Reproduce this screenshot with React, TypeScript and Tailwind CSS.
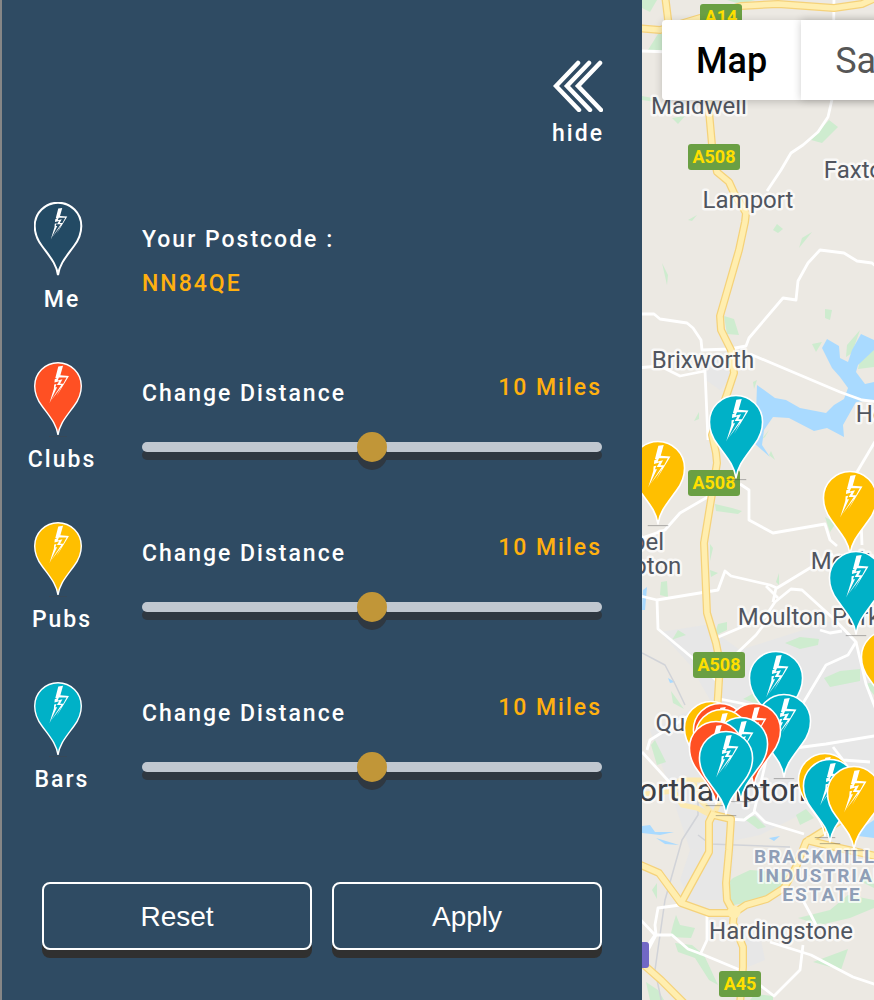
import { useState } from "react";

const COLORS = { me: "#234a64", clubs: "#ff5023", pubs: "#ffbf00", bars: "#00b1c7" };
type Kind = keyof typeof COLORS;

function PinShape({ kind }: { kind: Kind }) {
  return (
    <g>
      {kind !== "me" && (
        <path d="M-9 50.500H9" stroke="#444" strokeOpacity="0.35" strokeWidth="1" />
      )}
      <path
        d="M0 49C-1.500 38-8 31-16 20C-21 13.500-23.300 7-23.300 0A23.300 23.300 0 0 1 23.300 0C23.300 7 21 13.500 16 20C8 31 1.500 38 0 49Z"
        fill={COLORS[kind]}
        stroke="#fff"
        strokeWidth={kind === "me" ? 2 : 1.4}
      />
      <g transform={kind === "me" ? "translate(0 -1) scale(.25)" : "scale(.296)"} fill="#fff">
        <path d="M1-66L17-68L8-36L37-34L-6 36L29-29L3-29L-1-19L15-23L7-8L20-8L-24 50L11-3L-4-3L4-16L-12-12L-11-23L-3-26L-9-27Z" />
        <path d="M-13-5L-5-7L-9 4L-3 4L-29 58L-14 9Z" />
      </g>
    </g>
  );
}

function Legend({ kind, label }: { kind: Kind; label: string }) {
  return (
    <div className="flex flex-col items-center gap-2">
      <svg viewBox="-24 -24 56 76" className="h-[76px] w-14" aria-hidden="true">
        <PinShape kind={kind} />
      </svg>
      <span>{label}</span>
    </div>
  );
}

function DistanceRow({ kind, label }: { kind: Kind; label: string }) {
  const [miles, setMiles] = useState(10);
  const id = `distance-${kind}`;
  return (
    <div className="grid grid-cols-[120px_1fr] gap-5">
      <Legend kind={kind} label={label} />
      <div className="flex flex-col gap-6 pt-3">
        <div className="flex items-start justify-between">
          <label htmlFor={id} className="pt-1.5">
            Change Distance
          </label>
          <output htmlFor={id} className="text-[#ffb00f]">
            {miles} Miles
          </output>
        </div>
        <input
          id={id}
          type="range"
          min={0}
          max={20}
          value={miles}
          onChange={(e) => setMiles(Number(e.target.value))}
          className="my-2.5 block h-2.5 w-full appearance-none rounded-[5px] bg-[#c1c8d0] shadow-[0_8px_0_#2f3841] outline-none [&::-webkit-slider-thumb]:size-[30px] [&::-webkit-slider-thumb]:appearance-none [&::-webkit-slider-thumb]:rounded-full [&::-webkit-slider-thumb]:bg-[#c19638] [&::-webkit-slider-thumb]:shadow-[0_8px_0_#2f3841]"
        />
      </div>
    </div>
  );
}

const A_ROADS = [
  "M665-5L670 35L690 60L708 100L712 145L717 172L729 182L734 193L746 213L745 222L739 250L720 316L721 330L731 350L734 373L726 397L712 435L716 453L717 463L711 500L704 543L707 613L716 643L720 663L719 680L717 712",
  "M636 28L660 30L700 18L741 6L778 4L834 8L862 4L880-4",
  "M636 863L659 873L681 903L709 913L734 913L746 905L767 899L784 888L796 867L806 842L841 820",
  "M681 903L709 852L709 822L714 812",
  "M714 815L731 819L729 850L726 883L727 900L734 913L733 923L743 947L743 967L740 1004",
  "M636 958L661 980L685 1004",
  "M806 840L835 847L880 857",
];
const TOWN_ROADS = [
  "M636 795L674 791L680 780L706 780",
  "M674 791L682 805L697 808L714 817",
  "M694 783L700 800L714 815M720 800L714 815",
];
const ROADS = [
  "M642 51L672 52M834-4L833 95L828 117L818 132L803 145L791 153L781 170L767 191",
  "M636 314L654 314L660 319L687 323L693 328L701 340L702 350L730 349L746 346L749 338L783 298L796 300L798 281L808 263L820 250L844 253L857 261L872 263L880 270",
  "M636 368L660 366L680 376L705 371L708 440",
  "M750 354L840 392L862 400L880 402",
  "M880 433L857 472",
  "M718 491L680 513L665 530L636 540M740 484L749 490L749 520L773 533L825 524L830 540L837 546M861 520L862 545",
  "M636 595L657 600L718 590L725 571L731 576L770 585L777 588L833 554M766 586L778 598M776 588L773 602",
  "M657 600L658 629L695 660L716 680",
  "M716 638L765 617L775 602L791 589L802 590L834 619L856 642L848 655L826 665L790 725",
  "M716 668L735 655L756 635L775 610",
  "M856 642L866 684L880 720M820 630L830 633L842 631",
  "M647 750L650 740L690 715L720 699L750 705",
  "M780 750L826 744L880 735M768 752L754 812",
  "M730 819L744 820L755 812L765 822L804 834M833 747L843 760L870 762",
  "M636 915L655 935L648 945M680 905L658 908L655 925L656 935L648 950L636 960M655 935L672 935L688 949L704 955L740 970L774 996L800 970L803 945M700 955L707 940L707 915",
  "M770 942L811 955L853 977L880 986M800 895L811 915L816 925",
  "M642 752L673 786",
];
const RAIL = [
  "M642 653L665 665L675 684L685 705M698 790L698 815L682 840L665 900L655 970L662 1004M698 835L710 844L790 847",
];
const PARKS = [
  "M642 0H657L650 12L642 8Z", "M648 50L658 34L672 34V52Z", "M727 0L740 4L755 0Z",
  "M642 96L658 99L655 102L642 100Z", "M672 118L685 116L678 124Z", "M829 120L838 127L822 143L811 140Z",
  "M688 220L697 215L692 221Z", "M777 224L783 229L778 233L773 230Z", "M812 232L799 248L802 238Z",
  "M662 263L668 275L667 285Z", "M724 316L734 319L739 335L727 334Z", "M825 309L832 310L830 320L825 318Z",
  "M812 344L822 342L816 352Z", "M860 330L847 345L846 357L852 353Z", "M862 352L874 346V367L858 369Z",
  "M753 382L757 380L754 389Z", "M694 421L699 412V419Z", "M769 430L761 440L765 437Z", "M771 451L775 460L769 455Z",
  "M715 504L732 508L742 511L738 514L716 511Z", "M710 570L718 573L711 577Z", "M710 544L713 548L710 561Z",
  "M825 517L836 523L830 532Z", "M661 582L667 581L668 597L660 595Z", "M776 582L779 573V585Z",
  "M718 624L727 622L727 630L714 636Z", "M672 640L678 630L686 635L674 639Z", "M785 643L800 637L819 639L818 645L800 649Z",
  "M824 678L840 671L860 669V681L830 687Z", "M671 691L684 709L673 703Z", "M743 699L760 690V705Z",
  "M651 745L655 740L666 762L657 765Z", "M743 818L755 816L766 827L758 829Z",
  "M796 815L806 809L814 818L800 825Z", "M652 890L657 883L657 899Z", "M676 915L680 925L695 928L691 938L670 937L673 925Z",
  "M724 887L733 878L750 870L788 873L784 888L765 899L734 905Z", "M675 943L692 945L704 955L718 985L709 980L695 958L678 952Z",
  "M798 918L830 910L848 895L874 900V908L850 918L820 925Z", "M813 962L848 949L841 970Z", "M646 982L658 990L664 1000H650Z",
  "M858 880L866 870L874 880V888Z", "M865 684L874 682V695Z", "M750 1000L755 994L773 996V1000Z",
];
const WATER = [
  "M757 385L775 398L786 400L800 408L826 413L834 405L844 399L848 388L840 377L832 368L822 348L827 339L839 346L840 358L848 362L852 350L861 334L874 340V350L858 365L856 372L865 384L874 382V400L856 402L843 425L844 437L827 428L814 431L789 418L773 417L764 430L762 445L770 457L755 444Z",
  "M642 826L650 825L655 832L674 832L660 835L642 833Z", "M874 820L862 828L858 836L874 838Z",
  "M656 838L679 845L665 844Z", "M769 838L780 836L774 841Z", "M643 590L647 587L645 610L642 610Z", "M668 678L675 682L670 683Z",
];
const URBAN = [
  "M705 360L724 352L734 372L720 390L706 380Z",
  "M660 632L705 625L740 650L835 620L855 640L880 720V765L820 805L760 835L690 850L660 760L650 730L710 700L690 665Z",
  "M690 850L735 840L730 900L690 900L680 880Z", "M735 930L760 935L765 960L748 967Z",
];
const PLACES: { text: string; x: number; y: number; size?: number }[] = [
  { text: "Maidwell", x: 699, y: 114 },
  { text: "Lamport", x: 748, y: 208 },
  { text: "Faxton", x: 860, y: 178 },
  { text: "Brixworth", x: 703, y: 368 },
  { text: "Holcot", x: 891, y: 422 },
  { text: "Chapel", x: 627, y: 550 },
  { text: "Brampton", x: 629, y: 574 },
  { text: "Moulton", x: 855, y: 569 },
  { text: "Moulton Park", x: 809, y: 625 },
  { text: "Queensway", x: 717, y: 731 },
  { text: "Northampton", x: 711, y: 801, size: 32 },
  { text: "Hardingstone", x: 781, y: 939 },
];
const SHIELDS = [
  { text: "A14", x: 721, y: 17, w: 42 },
  { text: "A508", x: 714, y: 157, w: 52 },
  { text: "A508", x: 714, y: 483, w: 52 },
  { text: "A508", x: 719, y: 665, w: 52 },
  { text: "A45", x: 740, y: 984, w: 42 },
];
const PINS: { kind: Kind; x: number; y: number }[] = [
  { kind: "bars", x: 736, y: 422 },
  { kind: "pubs", x: 658, y: 468 },
  { kind: "pubs", x: 850, y: 498 },
  { kind: "bars", x: 856, y: 578 },
  { kind: "pubs", x: 888, y: 657 },
  { kind: "bars", x: 776, y: 678 },
  { kind: "bars", x: 784, y: 721 },
  { kind: "pubs", x: 711, y: 728 },
  { kind: "clubs", x: 720, y: 730 },
  { kind: "clubs", x: 754, y: 730 },
  { kind: "pubs", x: 722, y: 736 },
  { kind: "bars", x: 741, y: 744 },
  { kind: "clubs", x: 716, y: 748 },
  { kind: "bars", x: 726, y: 758 },
  { kind: "pubs", x: 825, y: 780 },
  { kind: "bars", x: 830, y: 786 },
  { kind: "pubs", x: 854, y: 793 },
];

function MapCanvas() {
  return (
    <svg className="absolute inset-0 size-full font-['Roboto',sans-serif]" role="img" aria-label="Map of Northampton">
      <g transform="translate(-642 0)" strokeLinejoin="round" fill="none">
        <g fill="#e7e7e7">{URBAN.map((d) => <path key={d} d={d} />)}</g>
        <g fill="#ceeccf">{PARKS.map((d) => <path key={d} d={d} />)}</g>
        <g fill="#a9daff">{WATER.map((d) => <path key={d} d={d} />)}</g>
        <g stroke="#d1d3d8" strokeWidth="1.500">{RAIL.map((d) => <path key={d} d={d} />)}</g>
        <g stroke="#fff" strokeWidth="2.800">{ROADS.map((d) => <path key={d} d={d} />)}</g>
        <g stroke="#fbe9b0" strokeWidth="5">{TOWN_ROADS.map((d) => <path key={d} d={d} />)}</g>
        <g stroke="#f5d27a" strokeWidth="8">{A_ROADS.map((d) => <path key={d} d={d} />)}</g>
        <g stroke="#ffeeaf" strokeWidth="5.500">{A_ROADS.map((d) => <path key={d} d={d} />)}</g>
        <circle cx="734" cy="912" r="6.500" fill="#ffeeaf" />
        <rect x="630" y="942" width="19" height="26" rx="3" fill="#7168c5" />
        {SHIELDS.map((s) => (
          <g key={`${s.x}-${s.y}`}>
            <rect x={s.x - s.w / 2} y={s.y - 13} width={s.w} height="26" rx="3" fill="#6a9f43" />
            <text x={s.x} y={s.y + 6} textAnchor="middle" fontSize="18" fontWeight="700" fill="#ffdf00">
              {s.text}
            </text>
          </g>
        ))}
        <g textAnchor="middle" fill="#50555f" stroke="#fff" strokeOpacity="0.700" strokeWidth="5" paintOrder="stroke">
          {PLACES.map((p) => (
            <text key={p.text} x={p.x} y={p.y} fontSize={p.size ?? 24} fill={p.size ? "#3c4047" : undefined}>
              {p.text}
            </text>
          ))}
        </g>
        <g
          textAnchor="middle"
          fontSize="19"
          fontWeight="700"
          fill="#8f9eb6"
          stroke="#fff"
          strokeOpacity="0.700"
          strokeWidth="4"
          paintOrder="stroke"
          className="tracking-[2px]"
        >
          <text x="822" y="863">BRACKMILLS</text>
          <text x="822" y="882">INDUSTRIAL</text>
          <text x="822" y="901">ESTATE</text>
        </g>
        {PINS.map((p) => (
          <g key={`${p.x}-${p.y}`} transform={`translate(${p.x} ${p.y}) scale(1.14)`}>
            <PinShape kind={p.kind} />
          </g>
        ))}
      </g>
    </svg>
  );
}

const actionClass =
  "h-[68px] flex-1 rounded-lg border-2 border-white pt-0.5 font-['Liberation_Sans',sans-serif] text-[28px] font-normal text-white shadow-[0_8px_0_#303030]";

export default function App() {
  return (
    <div className="flex min-h-screen overflow-hidden bg-[#ece9e3]">
      <aside className="w-[642px] shrink-0 border-l-2 border-[#868686] bg-[#2f4b63] pt-[60px] pb-[50px] font-['Roboto',sans-serif] text-[23px]/7 font-medium tracking-[2px] text-white">
        <div className="flex justify-end pr-[38px]">
          <button type="button" className="flex flex-col items-center gap-2">
            <svg viewBox="0 0 50 52" className="h-[52px] w-[50px]" fill="none" stroke="#fff" strokeWidth="4.500" strokeLinecap="round" aria-hidden="true">
              <path d="M25 3L3 26L26 50M36 3L14 26L37 50M47 3L25 26L48 50" />
            </svg>
            <span>hide</span>
          </button>
        </div>
        <div className="mt-[54px] flex flex-col gap-12 pr-10">
          <div className="grid grid-cols-[120px_1fr] gap-5">
            <Legend kind="me" label="Me" />
            <div className="pt-4 leading-[44px]">
              <p>Your Postcode :</p>
              <p className="text-[#ffb00f]">NN84QE</p>
            </div>
          </div>
          <DistanceRow kind="clubs" label="Clubs" />
          <DistanceRow kind="pubs" label="Pubs" />
          <DistanceRow kind="bars" label="Bars" />
        </div>
        <div className="mt-[88px] flex gap-5 px-10 tracking-normal">
          <button type="button" className={actionClass}>Reset</button>
          <button type="button" className={actionClass}>Apply</button>
        </div>
      </aside>
      <main className="relative min-w-0 flex-1 overflow-hidden">
        <MapCanvas />
        <div className="absolute top-5 left-5 flex h-20 rounded font-['Roboto',sans-serif] text-4xl shadow-[0_2px_8px_rgba(0,0,0,0.2)]">
          <button type="button" className="rounded-l bg-white px-[34px] pt-0.5 font-medium text-black">Map</button>
          <button type="button" className="rounded-r bg-white px-[34px] pt-0.5 text-[#565656] shadow-[0_0_8px_rgba(0,0,0,0.2)]">Satellite</button>
        </div>
      </main>
    </div>
  );
}
